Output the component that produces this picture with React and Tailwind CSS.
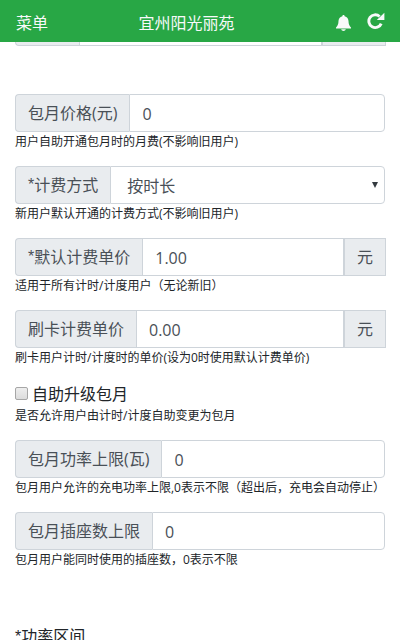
import { useState } from 'react'

const addon = 'flex items-center shrink-0 bg-[#e9ecef] border border-[#ced4da] px-3 text-[#495057] whitespace-nowrap'
const control = 'flex-1 min-w-0 h-full bg-white border border-[#ced4da] px-3 pt-0.5 text-[#495057] outline-none'

export default function App() {
  return (
    <div className="h-screen overflow-hidden bg-white text-base leading-6 text-[#212529] font-['Open_Sans','Noto_Sans_CJK_SC',sans-serif]">
      <Header />
      <form className="px-[15px] pt-2">
        <div className="flex h-[38px] mb-12">
          <span className={`${addon} w-16 rounded-l border-r-0`} />
          <input aria-label="价格" className={control} />
          <span className={`${addon} w-16 -mr-px`} />
        </div>
        <Field id="monthPrice" label="包月价格(元)" value="0" hint="用户自助开通包月时的月费(不影响旧用户)" />
        <Group id="chargeType" label="计费方式" required hint="新用户默认开通的计费方式(不影响旧用户)">
          <div className="relative flex-1 min-w-0">
            <select
              id="chargeType"
              className="w-full h-full appearance-none bg-white border border-[#ced4da] rounded-r px-4 pt-0.5 text-[#495057] outline-none"
            >
              <option>按时长</option>
              <option>按电量</option>
            </select>
            <svg viewBox="0 0 6 6" className="absolute right-[7px] top-4 w-1.5 h-1.5 pointer-events-none" fill="#343a40">
              <path d="M0 0h6L3 6z" />
            </svg>
          </div>
        </Group>
        <Field id="unitPrice" label="默认计费单价" required value="1.00" unit="元" hint="适用于所有计时/计度用户（无论新旧）" />
        <Field id="cardPrice" label="刷卡计费单价" value="0.00" unit="元" hint="刷卡用户计时/计度时的单价(设为0时使用默认计费单价)" />
        <div className="mb-3.5">
          <div className="flex items-center">
            <input
              id="upgrade"
              type="checkbox"
              className="appearance-none w-[13px] h-[13px] mr-1 -mt-px rounded-xs border border-[#a6a6a6] bg-linear-to-b from-[#eeeeee] to-[#dcdcdc] checked:from-[#28a745] checked:to-[#28a745]"
            />
            <label htmlFor="upgrade">自助升级包月</label>
          </div>
          <Hint>是否允许用户由计时/计度自助变更为包月</Hint>
        </div>
        <Field id="maxPower" label="包月功率上限(瓦)" value="0" hint="包月用户允许的充电功率上限,0表示不限（超出后，充电会自动停止）" />
        <Field id="maxSocket" label="包月插座数上限" value="0" hint="包月用户能同时使用的插座数，0表示不限" />
        <div className="pt-10">
          <Star />
          功率区间
        </div>
      </form>
    </div>
  )
}

function Header() {
  return (
    <header className="fixed inset-x-0 top-0 z-10 h-[42px] pl-4 pr-[15px] pt-1 flex items-center justify-between bg-[#28a745] text-[#f8f9fa]">
      <button type="button">菜单</button>
      <h1>宜州阳光丽苑</h1>
      <div className="w-[60px] pb-1 flex items-start justify-end gap-4">
        <button type="button" aria-label="通知">
          <svg viewBox="0 0 15 16" className="block mt-[3px] w-[15px] h-4" fill="currentColor">
            <path d="M7.5 0c.7 0 1.1.5 1.1 1.2C11.2 1.7 12.4 3.7 12.5 6c.1 3.2.8 4.8 2.5 6.5v1.100H0v-1.100C1.700 10.800 2.400 9.200 2.500 6c.1-2.300 1.300-4.300 3.900-4.800C6.400.5 6.800 0 7.500 0z" />
            <path d="M5.200 14.300h4.600c-.3 1.100-1.200 1.700-2.300 1.700s-2-.6-2.300-1.700z" />
          </svg>
        </button>
        <button type="button" aria-label="刷新">
          <svg viewBox="0 0 18 18" className="block w-[18px] h-[18px]" fill="none">
            <path d="M14.2 11.6A6.4 6.4 0 1 1 12.600 4.500" stroke="currentColor" strokeWidth="2.900" />
            <path d="M17.400 0.800V8H9.800z" fill="currentColor" />
          </svg>
        </button>
      </div>
    </header>
  )
}

function Star() {
  return <span className="font-['Liberation_Sans']">*</span>
}

function Group({ id, label, required, hint, children }) {
  return (
    <div className="mb-3.5">
      <div className="flex h-[38px]">
        <label htmlFor={id} className={`${addon} rounded-l border-r-0`}>
          {required && <Star />}
          {label}
        </label>
        {children}
      </div>
      <Hint>{hint}</Hint>
    </div>
  )
}

function Field({ id, label, required, value, unit, hint }) {
  const [text, setText] = useState(value)
  return (
    <Group id={id} label={label} required={required} hint={hint}>
      <input
        id={id}
        value={text}
        onChange={(e) => setText(e.target.value)}
        className={unit ? control : `${control} rounded-r`}
      />
      {unit && <span className={`${addon} -mr-px`}>{unit}</span>}
    </Group>
  )
}

function Hint({ children }) {
  return <p className="text-xs leading-5 whitespace-nowrap">{children}</p>
}
